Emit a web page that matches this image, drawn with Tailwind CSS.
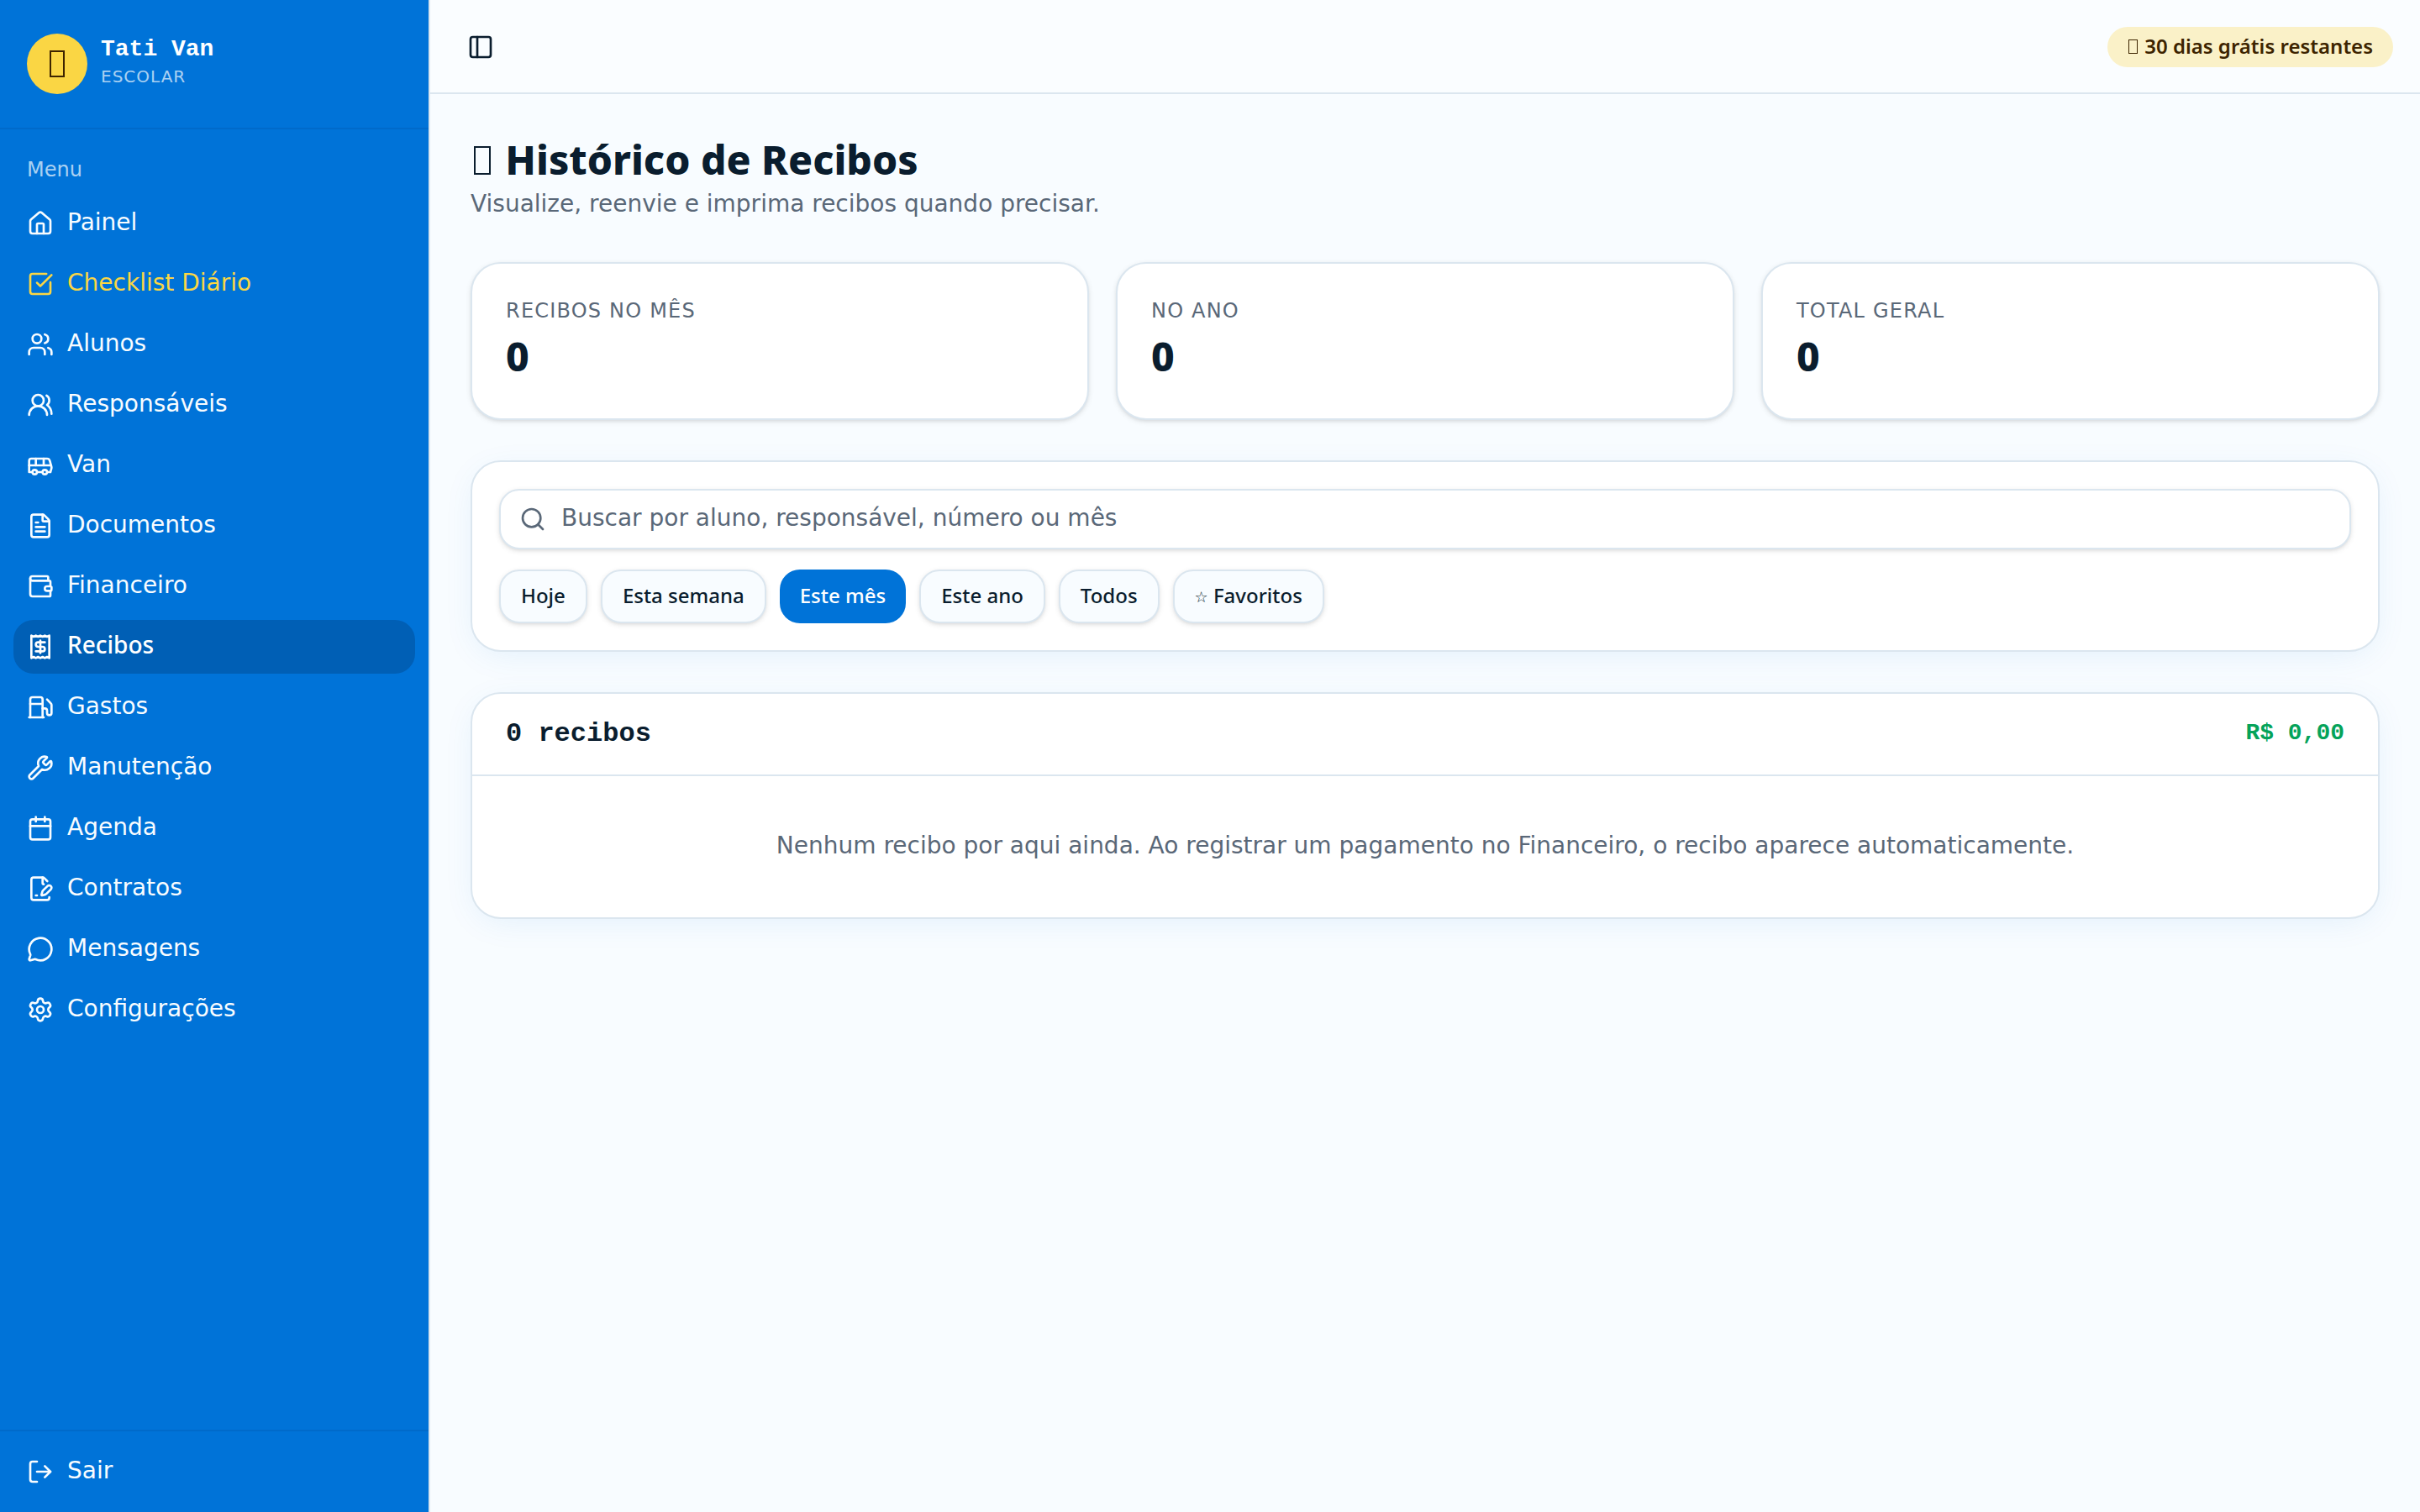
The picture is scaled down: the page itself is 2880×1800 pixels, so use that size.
<!DOCTYPE html>
<html lang="pt-BR">
<head>
    <meta charset="UTF-8" />
    <meta name="viewport" content="width=device-width, initial-scale=1" />
    <title>Tati Van Escolar - Recibos</title>
    <script src="https://cdn.jsdelivr.net/npm/@tailwindcss/browser@4"></script>
</head>
<body class="flex h-screen overflow-hidden bg-[#f8fcff] font-['DejaVu_Sans',sans-serif] text-[28px] leading-[40px] text-[#0a1d2e]">

<!-- Sidebar -->
<aside class="flex w-[512px] shrink-0 flex-col border-r-2 border-[#dbe6ef] bg-[#0073d8] text-[#f8fcff]">
    <div class="flex items-center gap-4 border-b-2 border-[#006aca] px-8 py-10">
        <div class="flex size-[72px] items-center justify-center rounded-full bg-[#fad644]">
            <span class="h-8 w-[18px] border-2 border-[#3d2400]"></span>
        </div>
        <div class="flex flex-col pb-[6px]">
            <span class="font-['Liberation_Mono',monospace] font-bold leading-[35px] text-white">Tati Van</span>
            <span class="text-[20px] leading-[30px] tracking-[0.05em] text-[#f8fcff]/70">ESCOLAR</span>
        </div>
    </div>

    <div class="flex flex-1 flex-col p-4">
        <div class="flex h-16 items-center px-4 text-[24px] leading-8 text-[#f8fcff]/70">Menu</div>
        <nav class="flex flex-col gap-2">
            <a class="flex h-16 items-center gap-4 rounded-[24px] px-4" href="#">
                <svg class="size-8" viewBox="0 0 24 24" fill="none" stroke="currentColor" stroke-width="2" stroke-linecap="round" stroke-linejoin="round"><path d="M15 21v-8a1 1 0 0 0-1-1h-4a1 1 0 0 0-1 1v8" /><path d="M3 10a2 2 0 0 1 .709-1.528l7-5.999a2 2 0 0 1 2.582 0l7 5.999A2 2 0 0 1 21 10v9a2 2 0 0 1-2 2H5a2 2 0 0 1-2-2z" /></svg>
                <span class="pb-[2px]">Painel</span>
            </a>
            <a class="flex h-16 items-center gap-4 rounded-[24px] px-4 text-[#fad644]" href="#">
                <svg class="size-8" viewBox="0 0 24 24" fill="none" stroke="currentColor" stroke-width="2" stroke-linecap="round" stroke-linejoin="round"><path d="M21 10.656V19a2 2 0 0 1-2 2H5a2 2 0 0 1-2-2V5a2 2 0 0 1 2-2h12.344" /><path d="m9 11 3 3L22 4" /></svg>
                <span class="pb-[2px]">Checklist Diário</span>
            </a>
            <a class="flex h-16 items-center gap-4 rounded-[24px] px-4" href="#">
                <svg class="size-8" viewBox="0 0 24 24" fill="none" stroke="currentColor" stroke-width="2" stroke-linecap="round" stroke-linejoin="round"><path d="M16 21v-2a4 4 0 0 0-4-4H6a4 4 0 0 0-4 4v2" /><path d="M16 3.128a4 4 0 0 1 0 7.744" /><path d="M22 21v-2a4 4 0 0 0-3-3.87" /><circle cx="9" cy="7" r="4" /></svg>
                <span class="pb-[2px]">Alunos</span>
            </a>
            <a class="flex h-16 items-center gap-4 rounded-[24px] px-4" href="#">
                <svg class="size-8" viewBox="0 0 24 24" fill="none" stroke="currentColor" stroke-width="2" stroke-linecap="round" stroke-linejoin="round"><path d="M18 21a8 8 0 0 0-16 0" /><circle cx="10" cy="8" r="5" /><path d="M22 20c0-3.37-2-6.5-4-8a5 5 0 0 0-.45-8.3" /></svg>
                <span class="pb-[2px]">Responsáveis</span>
            </a>
            <a class="flex h-16 items-center gap-4 rounded-[24px] px-4" href="#">
                <svg class="size-8" viewBox="0 0 24 24" fill="none" stroke="currentColor" stroke-width="2" stroke-linecap="round" stroke-linejoin="round"><path d="M8 6v6" /><path d="M15 6v6" /><path d="M2 12h19.6" /><path d="M18 18h3s.5-1.7.8-2.8c.1-.4.2-.8.2-1.2 0-.4-.1-.8-.2-1.2l-1.4-5C20.1 6.8 19.1 6 18 6H4a2 2 0 0 0-2 2v10h3" /><circle cx="7" cy="18" r="2" /><path d="M9 18h5" /><circle cx="16" cy="18" r="2" /></svg>
                <span class="pb-[2px]">Van</span>
            </a>
            <a class="flex h-16 items-center gap-4 rounded-[24px] px-4" href="#">
                <svg class="size-8" viewBox="0 0 24 24" fill="none" stroke="currentColor" stroke-width="2" stroke-linecap="round" stroke-linejoin="round"><path d="M6 22a2 2 0 0 1-2-2V4a2 2 0 0 1 2-2h8a2.4 2.4 0 0 1 1.704.706l3.588 3.588A2.4 2.4 0 0 1 20 8v12a2 2 0 0 1-2 2z" /><path d="M14 2v5a1 1 0 0 0 1 1h5" /><path d="M10 9H8" /><path d="M16 13H8" /><path d="M16 17H8" /></svg>
                <span class="pb-[2px]">Documentos</span>
            </a>
            <a class="flex h-16 items-center gap-4 rounded-[24px] px-4" href="#">
                <svg class="size-8" viewBox="0 0 24 24" fill="none" stroke="currentColor" stroke-width="2" stroke-linecap="round" stroke-linejoin="round"><path d="M19 7V4a1 1 0 0 0-1-1H5a2 2 0 0 0 0 4h15a1 1 0 0 1 1 1v4h-3a2 2 0 0 0 0 4h3a1 1 0 0 0 1-1v-2a1 1 0 0 0-1-1" /><path d="M3 5v14a2 2 0 0 0 2 2h15a1 1 0 0 0 1-1v-4" /></svg>
                <span class="pb-[2px]">Financeiro</span>
            </a>
            <a class="flex h-16 items-center gap-4 rounded-[24px] bg-[#005fb5] px-4 font-['Noto_Sans',sans-serif] font-medium text-white" href="#">
                <svg class="size-8" viewBox="0 0 24 24" fill="none" stroke="currentColor" stroke-width="2" stroke-linecap="round" stroke-linejoin="round"><path d="M4 2v20l2-1 2 1 2-1 2 1 2-1 2 1 2-1 2 1V2l-2 1-2-1-2 1-2-1-2 1-2-1-2 1Z" /><path d="M16 8h-6a2 2 0 1 0 0 4h4a2 2 0 1 1 0 4H8" /><path d="M12 17.5v-11" /></svg>
                <span class="pb-[6px]">Recibos</span>
            </a>
            <a class="flex h-16 items-center gap-4 rounded-[24px] px-4" href="#">
                <svg class="size-8" viewBox="0 0 24 24" fill="none" stroke="currentColor" stroke-width="2" stroke-linecap="round" stroke-linejoin="round"><path d="M14 13h2a2 2 0 0 1 2 2v2a2 2 0 0 0 4 0v-6.998a2 2 0 0 0-.59-1.42L18 5" /><path d="M14 21V5a2 2 0 0 0-2-2H5a2 2 0 0 0-2 2v16" /><path d="M2 21h13" /><path d="M3 9h11" /></svg>
                <span class="pb-[2px]">Gastos</span>
            </a>
            <a class="flex h-16 items-center gap-4 rounded-[24px] px-4" href="#">
                <svg class="size-8" viewBox="0 0 24 24" fill="none" stroke="currentColor" stroke-width="2" stroke-linecap="round" stroke-linejoin="round"><path d="M14.7 6.3a1 1 0 0 0 0 1.4l1.6 1.6a1 1 0 0 0 1.4 0l3.106-3.105c.32-.322.863-.22.983.218a6 6 0 0 1-8.259 7.057l-7.91 7.91a1 1 0 0 1-2.999-3l7.91-7.91a6 6 0 0 1 7.057-8.259c.438.12.54.662.219.984z" /></svg>
                <span class="pb-[2px]">Manutenção</span>
            </a>
            <a class="flex h-16 items-center gap-4 rounded-[24px] px-4" href="#">
                <svg class="size-8" viewBox="0 0 24 24" fill="none" stroke="currentColor" stroke-width="2" stroke-linecap="round" stroke-linejoin="round"><path d="M8 2v4" /><path d="M16 2v4" /><rect width="18" height="18" x="3" y="4" rx="2" /><path d="M3 10h18" /></svg>
                <span class="pb-[2px]">Agenda</span>
            </a>
            <a class="flex h-16 items-center gap-4 rounded-[24px] px-4" href="#">
                <svg class="size-8" viewBox="0 0 24 24" fill="none" stroke="currentColor" stroke-width="2" stroke-linecap="round" stroke-linejoin="round"><path d="m18.226 5.226-2.52-2.52A2.4 2.4 0 0 0 14 2H6a2 2 0 0 0-2 2v16a2 2 0 0 0 2 2h12a2 2 0 0 0 2-2v-.351" /><path d="M14 2v5a1 1 0 0 0 1 1" /><path d="M21.378 12.626a1 1 0 0 0-3.004-3.004l-4.01 4.012a2 2 0 0 0-.506.854l-.837 2.87a.5.5 0 0 0 .62.62l2.87-.837a2 2 0 0 0 .854-.506z" /><path d="M8 18h1" /></svg>
                <span class="pb-[2px]">Contratos</span>
            </a>
            <a class="flex h-16 items-center gap-4 rounded-[24px] px-4" href="#">
                <svg class="size-8" viewBox="0 0 24 24" fill="none" stroke="currentColor" stroke-width="2" stroke-linecap="round" stroke-linejoin="round"><path d="M2.992 16.342a2 2 0 0 1 .094 1.167l-1.065 3.29a1 1 0 0 0 1.236 1.168l3.413-.998a2 2 0 0 1 1.099.092 10 10 0 1 0-4.777-4.719" /></svg>
                <span class="pb-[2px]">Mensagens</span>
            </a>
            <a class="flex h-16 items-center gap-4 rounded-[24px] px-4" href="#">
                <svg class="size-8" viewBox="0 0 24 24" fill="none" stroke="currentColor" stroke-width="2" stroke-linecap="round" stroke-linejoin="round"><path d="M9.671 4.136a2.34 2.34 0 0 1 4.659 0 2.34 2.34 0 0 0 3.319 1.915 2.34 2.34 0 0 1 2.33 4.033 2.34 2.34 0 0 0 0 3.831 2.34 2.34 0 0 1-2.33 4.033 2.34 2.34 0 0 0-3.319 1.915 2.34 2.34 0 0 1-4.659 0 2.34 2.34 0 0 0-3.32-1.915 2.34 2.34 0 0 1-2.33-4.033 2.34 2.34 0 0 0 0-3.831A2.34 2.34 0 0 1 6.35 6.051a2.34 2.34 0 0 0 3.319-1.915" /><circle cx="12" cy="12" r="3" /></svg>
                <span class="pb-[2px]">Configurações</span>
            </a>
        </nav>
    </div>

    <div class="border-t-2 border-[#006aca] p-4">
        <a class="flex h-16 items-center gap-4 rounded-[24px] px-4" href="#">
            <svg class="size-8" viewBox="0 0 24 24" fill="none" stroke="currentColor" stroke-width="2" stroke-linecap="round" stroke-linejoin="round"><path d="m16 17 5-5-5-5" /><path d="M21 12H9" /><path d="M9 21H5a2 2 0 0 1-2-2V5a2 2 0 0 1 2-2h4" /></svg>
            <span class="pb-[2px]">Sair</span>
        </a>
    </div>
</aside>

<div class="flex min-w-0 flex-1 flex-col">
    <!-- Top bar -->
    <header class="flex h-28 items-center justify-between border-b-2 border-[#dbe6ef] bg-[#fafdff] px-8 pt-[2px]">
        <button class="flex size-14 items-center justify-center">
            <svg class="size-8" viewBox="0 0 24 24" fill="none" stroke="currentColor" stroke-width="2" stroke-linecap="round" stroke-linejoin="round"><rect width="18" height="18" x="3" y="3" rx="2" /><path d="M9 3v18" /></svg>
        </button>
        <span class="rounded-full bg-[#faf1c8] px-6 pt-[7px] pb-[9px] font-['Noto_Sans',sans-serif] text-[24px] font-semibold leading-8 text-[#3d2400]"><span class="mr-[1.9px] ml-[1.5px] inline-block h-[17px] w-[11px] border border-[#3d2400]"></span> 30 dias grátis restantes</span>
    </header>

    <main class="flex flex-col gap-12 p-12">
        <div>
            <h1 class="pb-1 font-['Noto_Sans',sans-serif] text-[48px] font-extrabold leading-[60px]"><span class="mr-[4.8px] ml-1 inline-block h-[34px] w-5 border-2 border-[#0a1d2e]"></span> Histórico de Recibos</h1>
            <p class="pb-[2px] leading-[38px] text-[#5a6878]">Visualize, reenvie e imprima recibos quando precisar.</p>
        </div>

        <!-- Totals -->
        <div class="grid grid-cols-3 gap-8">
            <div class="rounded-[36px] border-2 border-[#dbe6ef] bg-white p-10 shadow-[0_2px_6px_0_rgb(0_0_0/0.1),0_2px_4px_-2px_rgb(0_0_0/0.1)]">
                <p class="text-[24px] leading-8 tracking-[0.05em] text-[#5a6878]">RECIBOS NO MÊS</p>
                <p class="mt-2 pb-1 font-['Noto_Sans',sans-serif] text-[48px] font-extrabold leading-[60px]">0</p>
            </div>
            <div class="rounded-[36px] border-2 border-[#dbe6ef] bg-white p-10 shadow-[0_2px_6px_0_rgb(0_0_0/0.1),0_2px_4px_-2px_rgb(0_0_0/0.1)]">
                <p class="text-[24px] leading-8 tracking-[0.05em] text-[#5a6878]">NO ANO</p>
                <p class="mt-2 pb-1 font-['Noto_Sans',sans-serif] text-[48px] font-extrabold leading-[60px]">0</p>
            </div>
            <div class="rounded-[36px] border-2 border-[#dbe6ef] bg-white p-10 shadow-[0_2px_6px_0_rgb(0_0_0/0.1),0_2px_4px_-2px_rgb(0_0_0/0.1)]">
                <p class="text-[24px] leading-8 tracking-[0.05em] text-[#5a6878]">TOTAL GERAL</p>
                <p class="mt-2 pb-1 font-['Noto_Sans',sans-serif] text-[48px] font-extrabold leading-[60px]">0</p>
            </div>
        </div>

        <!-- Search and period filters -->
        <div class="flex flex-col gap-6 rounded-[36px] border-2 border-[#dbe6ef] bg-white p-8 shadow-[0_8px_40px_-8px_rgb(0_115_216/0.1)]">
            <label class="flex h-[72px] items-center gap-[18px] rounded-[24px] border-2 border-[#dbe6ef] bg-white px-[22px] text-[#5a6878] shadow-[0_2px_6px_0_rgb(0_0_0/0.1),0_2px_4px_-2px_rgb(0_0_0/0.1)]">
                <svg class="size-8 shrink-0" viewBox="0 0 24 24" fill="none" stroke="currentColor" stroke-width="2" stroke-linecap="round" stroke-linejoin="round"><path d="m21 21-4.34-4.34" /><circle cx="11" cy="11" r="8" /></svg>
                <input type="text" placeholder="Buscar por aluno, responsável, número ou mês" class="flex-1 bg-transparent pb-[2px] outline-none placeholder:text-[#5a6878]" />
            </label>
            <div class="flex gap-4 font-['Noto_Sans',sans-serif] text-[24px] font-medium leading-8">
                <button class="h-16 rounded-[24px] border-2 border-[#dbe6ef] bg-[#f8fcff] px-6 pb-[2px] shadow-[0_2px_6px_0_rgb(0_0_0/0.1),0_2px_4px_-2px_rgb(0_0_0/0.1)]">Hoje</button>
                <button class="h-16 rounded-[24px] border-2 border-[#dbe6ef] bg-[#f8fcff] px-6 pb-[2px] shadow-[0_2px_6px_0_rgb(0_0_0/0.1),0_2px_4px_-2px_rgb(0_0_0/0.1)]">Esta semana</button>
                <button class="h-16 rounded-[24px] bg-[#0073d8] px-6 pb-[2px] text-white">Este mês</button>
                <button class="h-16 rounded-[24px] border-2 border-[#dbe6ef] bg-[#f8fcff] px-6 pb-[2px] shadow-[0_2px_6px_0_rgb(0_0_0/0.1),0_2px_4px_-2px_rgb(0_0_0/0.1)]">Este ano</button>
                <button class="h-16 rounded-[24px] border-2 border-[#dbe6ef] bg-[#f8fcff] px-6 pb-[2px] shadow-[0_2px_6px_0_rgb(0_0_0/0.1),0_2px_4px_-2px_rgb(0_0_0/0.1)]">Todos</button>
                <button class="h-16 rounded-[24px] border-2 border-[#dbe6ef] bg-[#f8fcff] px-6 pb-[2px] shadow-[0_2px_6px_0_rgb(0_0_0/0.1),0_2px_4px_-2px_rgb(0_0_0/0.1)]"><span class="align-[1px] font-['DejaVu_Sans',sans-serif] text-[18px] leading-none">☆</span> Favoritos</button>
            </div>
        </div>

        <!-- Receipt list -->
        <div class="rounded-[36px] border-2 border-[#dbe6ef] bg-white shadow-[0_8px_40px_-8px_rgb(0_115_216/0.1)]">
            <div class="flex items-center justify-between border-b-2 border-[#dbe6ef] px-10 py-6 font-['Liberation_Mono',monospace] font-bold">
                <h2 class="text-[32px] leading-[48px]">0 recibos</h2>
                <span class="pb-[2px] text-[#05a35a]">R$ 0,00</span>
            </div>
            <p class="px-16 pt-16 pb-[66px] text-center leading-[38px] text-[#5a6878]">Nenhum recibo por aqui ainda. Ao registrar um pagamento no Financeiro, o recibo aparece automaticamente.</p>
        </div>
    </main>
</div>
</body>
</html>
